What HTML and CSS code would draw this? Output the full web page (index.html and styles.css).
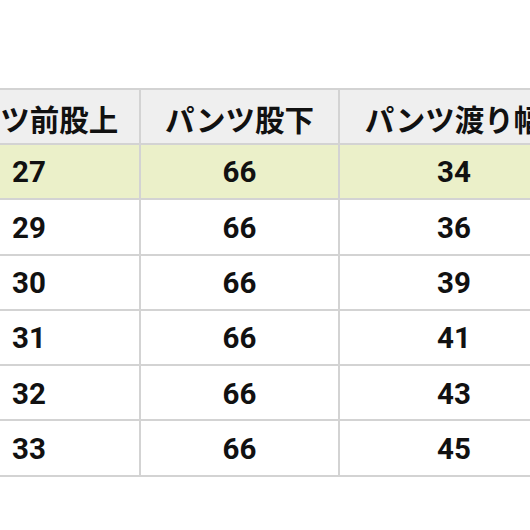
FILE: index.html
```
<!DOCTYPE html>
<html lang="ja">
<head>
<meta charset="utf-8">
<link rel="stylesheet" href="styles.css">
</head>
<body>
<div class="frame">
<table class="size-table">
<colgroup><col class="c1"><col class="c2"><col class="c3"></colgroup>
<thead>
<tr><th>パンツ前股上</th><th>パンツ股下</th><th>パンツ渡り幅</th></tr>
</thead>
<tbody>
<tr class="hl"><td>27</td><td>66</td><td>34</td></tr>
<tr><td>29</td><td>66</td><td>36</td></tr>
<tr><td>30</td><td>66</td><td>39</td></tr>
<tr><td>31</td><td>66</td><td>41</td></tr>
<tr><td>32</td><td>66</td><td>43</td></tr>
<tr><td>33</td><td>66</td><td>45</td></tr>
</tbody>
</table>
</div>
</body>
</html>
```
FILE: styles.css
```
html, body {
  margin: 0;
  padding: 0;
  background: #ffffff;
}
.frame {
  width: 530px;
  height: 530px;
  overflow: hidden;
  padding-top: 88px;
  box-sizing: border-box;
}
.size-table {
  border-collapse: collapse;
  table-layout: fixed;
  width: 651px;
  margin-left: -83px;
  font-family: Roboto, "Noto Sans CJK JP", sans-serif;
  color: #111111;
}
.c1 { width: 222px; }
.c2 { width: 199px; }
.c3 { width: 230px; }
.size-table th,
.size-table td {
  border: 2px solid #d3d3d3;
  padding: 0;
  text-align: center;
  vertical-align: middle;
  white-space: nowrap;
  line-height: 1;
}
.size-table th {
  background: #efefef;
  font-family: "Noto Sans CJK JP", sans-serif;
  font-weight: 700;
  font-size: 29.5px;
  height: 49px;
  padding-top: 4px;
}
.size-table td {
  font-weight: 700;
  font-size: 29.5px;
  height: 50.3px;
  padding-top: 3px;
}
.size-table tr.hl td {
  background: #ebf0c9;
}
```
